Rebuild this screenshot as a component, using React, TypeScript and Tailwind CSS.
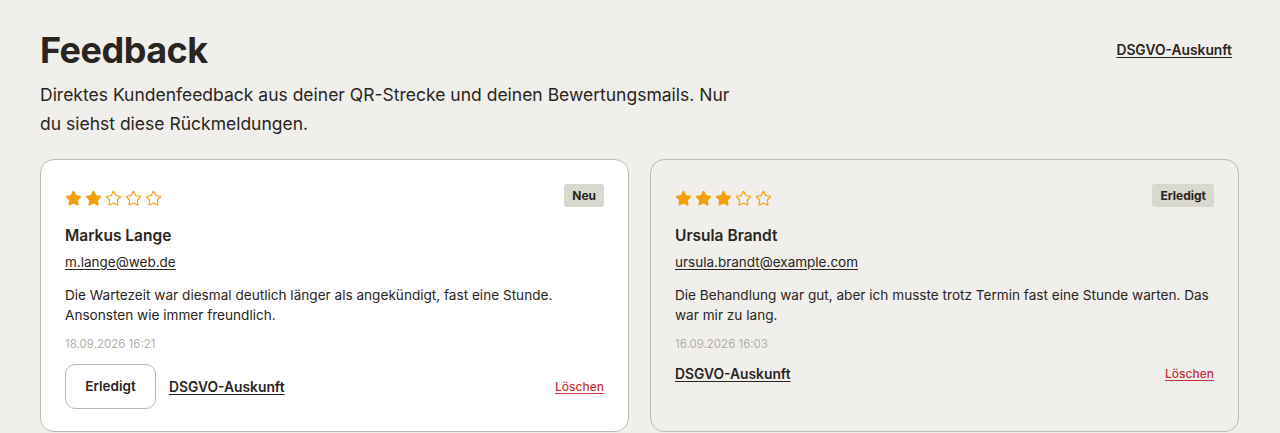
import { Star } from "lucide-react";

interface Entry {
  id: number;
  rating: number;
  name: string;
  email: string;
  text: string;
  date: string;
  status: "Neu" | "Erledigt";
}

const ENTRIES: Entry[] = [
  {
    id: 1,
    rating: 2,
    name: "Markus Lange",
    email: "m.lange@web.de",
    text: "Die Wartezeit war diesmal deutlich länger als angekündigt, fast eine Stunde. Ansonsten wie immer freundlich.",
    date: "18.09.2026 16:21",
    status: "Neu",
  },
  {
    id: 2,
    rating: 3,
    name: "Ursula Brandt",
    email: "ursula.brandt@example.com",
    text: "Die Behandlung war gut, aber ich musste trotz Termin fast eine Stunde warten. Das war mir zu lang.",
    date: "16.09.2026 16:03",
    status: "Erledigt",
  },
];

function Stars({ rating }: { rating: number }) {
  return (
    <div className="flex items-center gap-[3px]">
      {[1, 2, 3, 4, 5].map((i) => (
        <Star
          key={i}
          className="w-[17px] h-[17px] text-[#f59e0b]"
          strokeWidth={1.6}
          fill={i <= rating ? "#f59e0b" : "none"}
        />
      ))}
    </div>
  );
}

function FeedbackCard({ entry }: { entry: Entry }) {
  const isNew = entry.status === "Neu";
  return (
    <div
      className={`rounded-[14px] border border-[#bdbab3] px-6 pt-6 pb-[22px] ${
        isNew ? "bg-white" : "bg-[#f0efec]"
      }`}
    >
      {/* Header */}
      <div className="flex items-start justify-between h-[23px]">
        <div className="pt-[6px]">
          <Stars rating={entry.rating} />
        </div>
        <span className="rounded-[3px] bg-[#d9d8cf] px-2 h-[23px] flex items-center text-[12px] font-bold text-[#2a2520]">
          {entry.status}
        </span>
      </div>

      <div className="mt-[17px] text-[15.5px] leading-6 font-semibold text-[#2a2520]">{entry.name}</div>
      <a className="block mt-[4px] text-[13.5px] leading-5 text-[#2a2520] underline underline-offset-2" href="#">
        {entry.email}
      </a>
      <p className="mt-[13px] text-[13.6px] leading-5 text-[#2a2520]">{entry.text}</p>
      <div className="mt-[9px] text-[11.5px] leading-5 text-[#b3b0aa]">{entry.date}</div>

      {/* Footer */}
      <div className="mt-[10px] flex items-center justify-between">
        <div className="flex items-center gap-[13px]">
          {isNew && (
            <button className="h-[45px] w-[91px] rounded-[10px] border border-[#bdbab3] bg-white text-[13.5px] font-semibold text-[#2a2520]">
              Erledigt
            </button>
          )}
          <a className="text-[13.8px] leading-5 font-semibold text-[#2a2520] underline underline-offset-2" href="#">
            DSGVO-Auskunft
          </a>
        </div>
        <a className="text-[12px] leading-5 font-medium text-[#c8323a] underline underline-offset-2" href="#">
          Löschen
        </a>
      </div>
    </div>
  );
}

export default function App() {
  return (
    <div
      className="min-h-screen bg-[#f0efec] px-10 pt-[28px] text-[#2a2520]"
      style={{ fontFamily: "Inter, 'Noto Sans', sans-serif" }}
    >
      <div className="flex items-start justify-between">
        <div>
          <h1 className="text-[36px] leading-[44px] font-bold tracking-[-0.5px] text-[#2a2520]">Feedback</h1>
          <p className="mt-[8px] max-w-[705px] text-[17.5px] leading-[29px] text-[#2a2520]">
            Direktes Kundenfeedback aus deiner QR-Strecke und deinen Bewertungsmails. Nur du siehst diese Rückmeldungen.
          </p>
        </div>
        <a className="mr-[8px] mt-[12px] text-[13.8px] font-semibold text-[#2a2520] underline underline-offset-2" href="#">
          DSGVO-Auskunft
        </a>
      </div>

      <div className="mt-[21px] grid grid-cols-2 gap-[21px] w-[1199px]">
        {ENTRIES.map((e) => (
          <FeedbackCard key={e.id} entry={e} />
        ))}
      </div>
    </div>
  );
}
